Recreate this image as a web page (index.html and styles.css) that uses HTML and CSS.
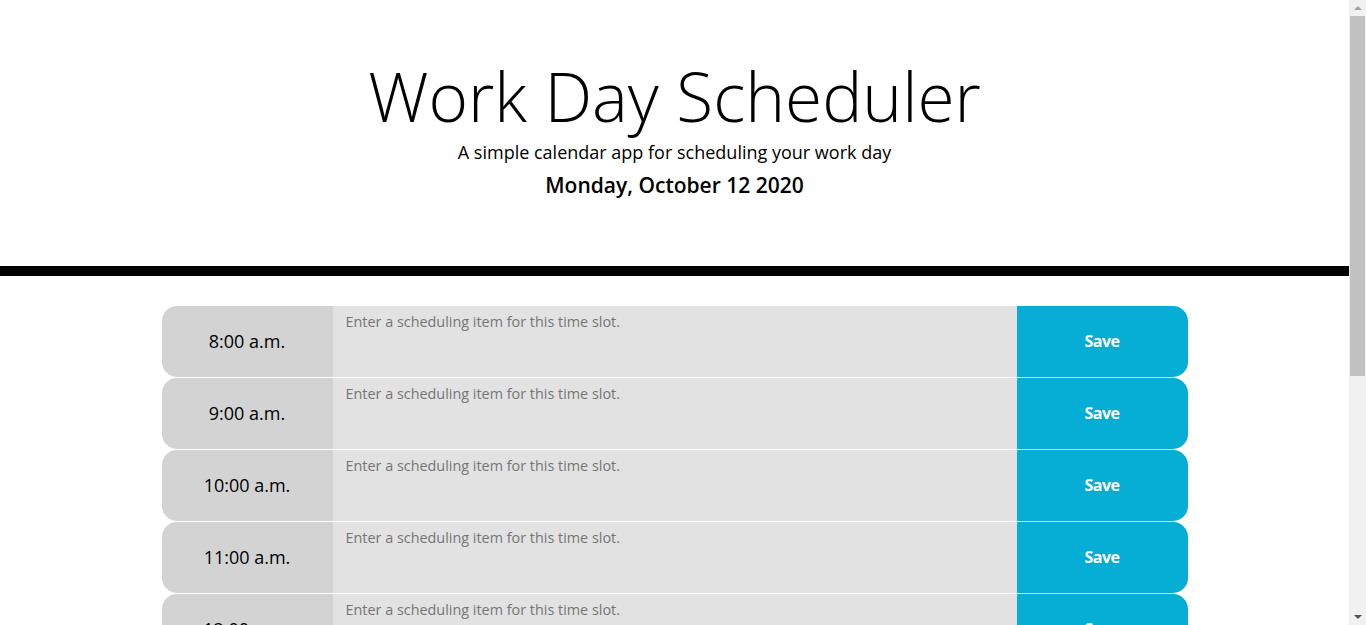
FILE: index.html
```html
<!DOCTYPE html>
<html lang="en">
<head>
<meta charset="utf-8">
<title>Work Day Scheduler</title>
<link rel="stylesheet" href="styles.css">
</head>
<body>
<div class="page">
  <header class="jumbotron">
    <h1 class="title">Work Day Scheduler</h1>
    <p class="lead">A simple calendar app for scheduling your work day</p>
    <p class="current-day">Monday, October 12 2020</p>
  </header>
  <main class="container">
    <div class="row">
      <div class="hour">8:00 a.m.</div>
      <textarea class="description" placeholder="Enter a scheduling item for this time slot."></textarea>
      <button class="save-btn">Save</button>
    </div>
    <div class="row">
      <div class="hour">9:00 a.m.</div>
      <textarea class="description" placeholder="Enter a scheduling item for this time slot."></textarea>
      <button class="save-btn">Save</button>
    </div>
    <div class="row">
      <div class="hour">10:00 a.m.</div>
      <textarea class="description" placeholder="Enter a scheduling item for this time slot."></textarea>
      <button class="save-btn">Save</button>
    </div>
    <div class="row">
      <div class="hour">11:00 a.m.</div>
      <textarea class="description" placeholder="Enter a scheduling item for this time slot."></textarea>
      <button class="save-btn">Save</button>
    </div>
    <div class="row">
      <div class="hour">12:00 p.m.</div>
      <textarea class="description" placeholder="Enter a scheduling item for this time slot."></textarea>
      <button class="save-btn">Save</button>
    </div>
    <div class="row">
      <div class="hour">1:00 p.m.</div>
      <textarea class="description" placeholder="Enter a scheduling item for this time slot."></textarea>
      <button class="save-btn">Save</button>
    </div>
    <div class="row">
      <div class="hour">2:00 p.m.</div>
      <textarea class="description" placeholder="Enter a scheduling item for this time slot."></textarea>
      <button class="save-btn">Save</button>
    </div>
    <div class="row">
      <div class="hour">3:00 p.m.</div>
      <textarea class="description" placeholder="Enter a scheduling item for this time slot."></textarea>
      <button class="save-btn">Save</button>
    </div>
    <div class="row">
      <div class="hour">4:00 p.m.</div>
      <textarea class="description" placeholder="Enter a scheduling item for this time slot."></textarea>
      <button class="save-btn">Save</button>
    </div>
    <div class="row">
      <div class="hour">5:00 p.m.</div>
      <textarea class="description" placeholder="Enter a scheduling item for this time slot."></textarea>
      <button class="save-btn">Save</button>
    </div>
  </main>
</div>
<div class="scrollbar" aria-hidden="true">
  <span class="arrow arrow-up"></span>
  <span class="thumb"></span>
  <span class="arrow arrow-down"></span>
</div>
</body>
</html>
```
FILE: styles.css
```css
body {
  margin: 0;
  font-family: "Open Sans", "Liberation Sans", sans-serif;
  color: #000;
  background: #fff;
  line-height: 1.5;
}
.page {
  margin-right: 17px;
}
.jumbotron {
  text-align: center;
  padding: 56px 32px 64px;
  border-bottom: 10px solid #000;
  margin-bottom: 29px;
}
.title {
  margin: 0 0 2px;
  font-size: 67.5px;
  font-weight: 300;
  line-height: 1.2;
}
.lead {
  margin: 0;
  font-size: 18px;
  font-weight: 400;
  line-height: 1.5;
}
.current-day {
  margin: 4px 0 0;
  font-size: 21px;
  font-weight: 600;
  line-height: 1.5;
}
.container {
  width: 1026px;
  margin: 0 auto 40px;
}
.row {
  box-sizing: border-box;
  display: grid;
  grid-template-columns: 1fr 4fr 1fr;
  height: 72px;
  border-top: 1px solid #fff;
}
.hour {
  display: flex;
  align-items: center;
  justify-content: center;
  background: #d3d3d3;
  border-radius: 15px 0 0 15px;
  font-size: 18px;
}
.description {
  margin: 0;
  border: 0;
  padding: 4px 13px;
  background: #e2e2e2;
  font-family: inherit;
  font-size: 14.4px;
  line-height: 24px;
  resize: none;
  color: #000;
}
.description::placeholder {
  color: #757575;
}
.save-btn {
  border: 0;
  background: #06aed5;
  color: #fff;
  font-family: inherit;
  font-size: 16px;
  font-weight: 700;
  letter-spacing: -0.5px;
  border-radius: 0 15px 15px 0;
  cursor: pointer;
}
.scrollbar {
  position: fixed;
  top: 0;
  right: 0;
  bottom: 0;
  width: 17px;
  background: #f1f1f1;
  display: flex;
  flex-direction: column;
  align-items: center;
}
.arrow {
  width: 0;
  height: 0;
  border-left: 4px solid transparent;
  border-right: 4px solid transparent;
}
.arrow-up {
  margin: 6px 0 6px;
  border-bottom: 4px solid #a3a3a3;
}
.arrow-down {
  margin-top: auto;
  margin-bottom: 6px;
  border-top: 4px solid #505050;
}
.thumb {
  width: 15px;
  height: 360px;
  background: #c1c1c1;
}
```
